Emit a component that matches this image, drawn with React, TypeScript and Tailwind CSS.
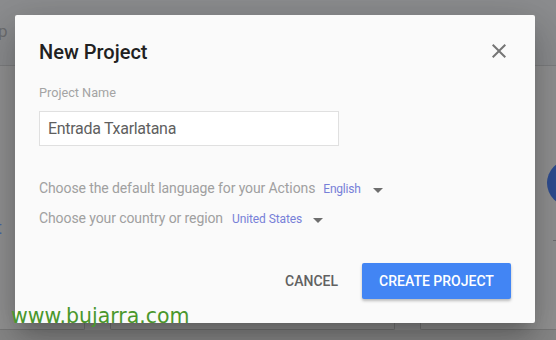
import React from "react";

export default function App() {
  return (
    <div className="relative w-[556px] h-[340px] overflow-hidden flex flex-col bg-[#929293] font-['Roboto',sans-serif]">
      {/* page header under the overlay */}
      <div className="h-[66px] shrink-0 bg-[#8c8d8f] border-b border-[#7e7f81] flex items-center">
        <span className="ml-[-2px] mt-[-2px] text-[17px] text-[#6c6d70]">p</span>
      </div>
      {/* page body under the overlay */}
      <div className="flex-1 flex flex-col">
        <div className="flex-1 flex justify-between">
          <div className="pt-[148px]">
            <span className="ml-[-4px] text-[18px] text-[#4867aa]">t</span>
          </div>
          <div className="pt-[94px] flex flex-col items-start">
            <div className="w-[46px] h-[46px] rounded-full bg-[#2f4e93] mr-[-37px]" />
            <div className="mt-[34px] ml-[6px] w-[3px] h-[1px] bg-[#6f6f73]" />
          </div>
        </div>
        <div className="h-[20px] flex gap-[25px] ml-[-20px]">
          <div className="w-[108px] bg-[#949494] border-b border-r border-[#7a7a7a] rounded-br-[2px]" />
          <div className="w-[295px] bg-[#949494] border-b border-x border-[#7a7a7a] rounded-b-[2px]" />
          <div className="w-[140px] bg-[#949494] border-b border-l border-[#7a7a7a] rounded-bl-[2px]" />
        </div>
        <div className="h-[10px] bg-[#898989]" />
      </div>

      {/* dialog */}
      <div className="absolute left-[15px] top-[15px] w-[520px] h-[308px] bg-[#fafafa] rounded-[2px] shadow-[0_11px_15px_-7px_rgba(0,0,0,0.2),0_24px_38px_3px_rgba(0,0,0,0.14),0_9px_46px_8px_rgba(0,0,0,0.12)] flex flex-col px-[24px] pt-[23px] pb-[24px]">
        <div className="flex justify-between items-start">
          <h2 className="text-[20px] leading-[28px] font-medium text-[#212121]">New Project</h2>
          <svg className="mt-[1px]" width="24" height="24" viewBox="0 0 24 24" fill="#757575">
            <path d="M19 6.41L17.59 5 12 10.59 6.41 5 5 6.41 10.59 12 5 17.59 6.41 19 12 13.41 17.59 19 19 17.59 13.41 12z" />
          </svg>
        </div>
        <div className="mt-[19px] text-[12.7px] leading-[16px] text-[#a4a4a4]">Project Name</div>
        <div className="mt-[10px] w-[300px] h-[35px] border border-[#e0e0e0] bg-white flex items-center pl-[8px] text-[16px] tracking-[-0.3px] text-[#5f5f5f]">
          Entrada Txarlatana
        </div>
        <div className="mt-[32px] flex items-baseline h-[20px] leading-[20px]">
          <span className="text-[14px] tracking-[-0.1px] text-[#a0a0a0]">Choose the default language for your Actions</span>
          <span className="ml-[8px] text-[12px] tracking-[-0.2px] text-[#7780d8]">English</span>
          <span className="ml-[12px] mb-[1px] w-0 h-0 border-l-[5px] border-r-[5px] border-t-[5px] border-l-transparent border-r-transparent border-t-[#6e6e6e]" />
        </div>
        <div className="mt-[10px] flex items-baseline h-[20px] leading-[20px]">
          <span className="text-[14px] tracking-[-0.1px] text-[#a0a0a0]">Choose your country or region</span>
          <span className="ml-[9px] text-[12px] tracking-[-0.1px] text-[#7780d8]">United States</span>
          <span className="ml-[11px] mb-[1px] w-0 h-0 border-l-[5px] border-r-[5px] border-t-[5px] border-l-transparent border-r-transparent border-t-[#6e6e6e]" />
        </div>
        <div className="mt-auto flex justify-end items-center gap-2">
          <button className="h-[36px] px-4 text-[14px] font-medium text-[#616161]">CANCEL</button>
          <button className="h-[36px] w-[149px] rounded-[2px] bg-[#4285f4] text-white text-[14px] font-medium shadow-[0_2px_3px_rgba(0,0,0,0.25)] flex items-center justify-center">
            CREATE PROJECT
          </button>
        </div>
      </div>

      {/* watermark */}
      <div className="absolute left-[11px] top-[306px] text-[20.5px] leading-[20px] text-[#4a972c] font-['DejaVu_Sans',sans-serif]">
        www.bujarra.com
      </div>
    </div>
  );
}
